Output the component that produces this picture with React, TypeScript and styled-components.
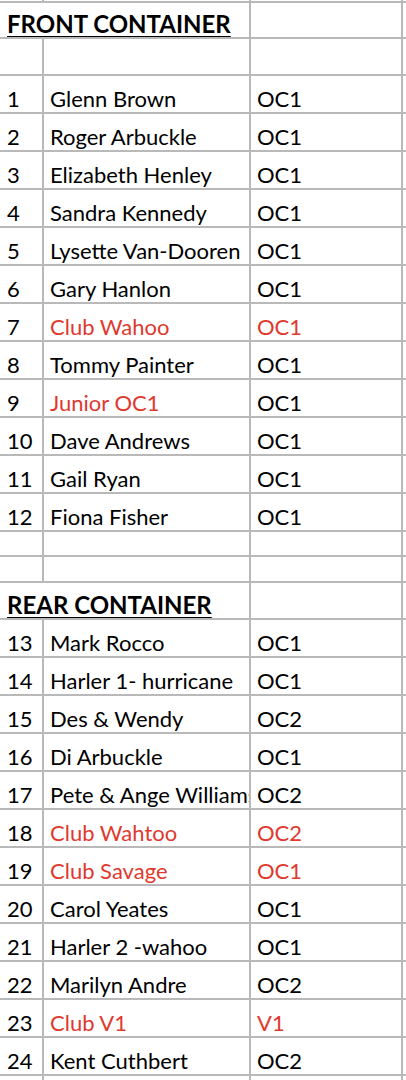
import React, { FC } from 'react'
import styled, { createGlobalStyle } from 'styled-components'

const GlobalStyle = createGlobalStyle`
	html, body {
		margin: 0;
		padding: 0;
		background: #ffffff;
	}
	body {
		font-family: Lato, 'Open Sans', 'Liberation Sans', sans-serif;
		overflow: hidden;
	}
`

type Entry = {
	no: number
	name: string
	craft: string
	nameRed?: boolean
	craftRed?: boolean
}

const front: Entry[] = [
	{ no: 1, name: 'Glenn Brown', craft: 'OC1' },
	{ no: 2, name: 'Roger Arbuckle', craft: 'OC1' },
	{ no: 3, name: 'Elizabeth Henley', craft: 'OC1' },
	{ no: 4, name: 'Sandra Kennedy', craft: 'OC1' },
	{ no: 5, name: 'Lysette Van-Dooren', craft: 'OC1' },
	{ no: 6, name: 'Gary Hanlon', craft: 'OC1' },
	{ no: 7, name: 'Club Wahoo', craft: 'OC1', nameRed: true, craftRed: true },
	{ no: 8, name: 'Tommy Painter', craft: 'OC1' },
	{ no: 9, name: 'Junior OC1', craft: 'OC1', nameRed: true },
	{ no: 10, name: 'Dave Andrews', craft: 'OC1' },
	{ no: 11, name: 'Gail Ryan', craft: 'OC1' },
	{ no: 12, name: 'Fiona Fisher', craft: 'OC1' },
]

const rear: Entry[] = [
	{ no: 13, name: 'Mark Rocco', craft: 'OC1' },
	{ no: 14, name: 'Harler 1- hurricane', craft: 'OC1' },
	{ no: 15, name: 'Des & Wendy', craft: 'OC2' },
	{ no: 16, name: 'Di Arbuckle', craft: 'OC1' },
	{ no: 17, name: 'Pete & Ange Williams', craft: 'OC2' },
	{ no: 18, name: 'Club Wahtoo', craft: 'OC2', nameRed: true, craftRed: true },
	{ no: 19, name: 'Club Savage', craft: 'OC1', nameRed: true, craftRed: true },
	{ no: 20, name: 'Carol Yeates', craft: 'OC1' },
	{ no: 21, name: 'Harler 2 -wahoo', craft: 'OC1' },
	{ no: 22, name: 'Marilyn Andre', craft: 'OC2' },
	{ no: 23, name: 'Club V1', craft: 'V1', nameRed: true, craftRed: true },
	{ no: 24, name: 'Kent Cuthbert', craft: 'OC2' },
]

const Sheet = styled.div`
	width: 406px;
	overflow: hidden;
	font-size: 22px;
	color: #000;
`

const Row = styled.div<{ $h: number }>`
	display: grid;
	grid-template-columns: 44px 207px 152px 40px;
	height: ${(p) => p.$h}px;
`

const Cell = styled.div<{ $red?: boolean; $span?: number; $pad?: number }>`
	box-sizing: border-box;
	grid-column: span ${(p) => p.$span ?? 1};
	border-right: 2px solid #b9b9b9;
	border-bottom: 2px solid #b9b9b9;
	padding: 0 0 1px ${(p) => p.$pad ?? 6}px;
	display: flex;
	align-items: flex-end;
	white-space: nowrap;
	overflow: hidden;
	line-height: 24px;
	color: ${(p) => (p.$red ? '#e0392e' : '#000')};
`

const Heading = styled.span`
	font-size: 24px;
	font-weight: bold;
	text-decoration: underline;
	text-underline-offset: 3px;
	text-decoration-thickness: 2px;
`

const BlankRow: FC<{ h: number }> = ({ h }) => (
	<Row $h={h}>
		<Cell />
		<Cell />
		<Cell />
		<Cell />
	</Row>
)

const TitleRow: FC<{ title: string; h: number }> = ({ title, h }) => (
	<Row $h={h}>
		<Cell $span={2} $pad={7}>
			<Heading>{title}</Heading>
		</Cell>
		<Cell />
		<Cell />
	</Row>
)

const EntryRow: FC<{ e: Entry }> = ({ e }) => (
	<Row $h={38}>
		<Cell $pad={7}>{e.no}</Cell>
		<Cell $red={e.nameRed}>{e.name}</Cell>
		<Cell $red={e.craftRed}>{e.craft}</Cell>
		<Cell />
	</Row>
)

const App: FC = () => (
	<>
		<GlobalStyle />
		<Sheet>
			<BlankRow h={3} />
			<TitleRow title="FRONT CONTAINER" h={36} />
			<BlankRow h={37} />
			{front.map((e) => (
				<EntryRow key={e.no} e={e} />
			))}
			<BlankRow h={25} />
			<BlankRow h={26} />
			<TitleRow title="REAR CONTAINER" h={37} />
			{rear.map((e) => (
				<EntryRow key={e.no} e={e} />
			))}
			<BlankRow h={38} />
		</Sheet>
	</>
)

export default App
